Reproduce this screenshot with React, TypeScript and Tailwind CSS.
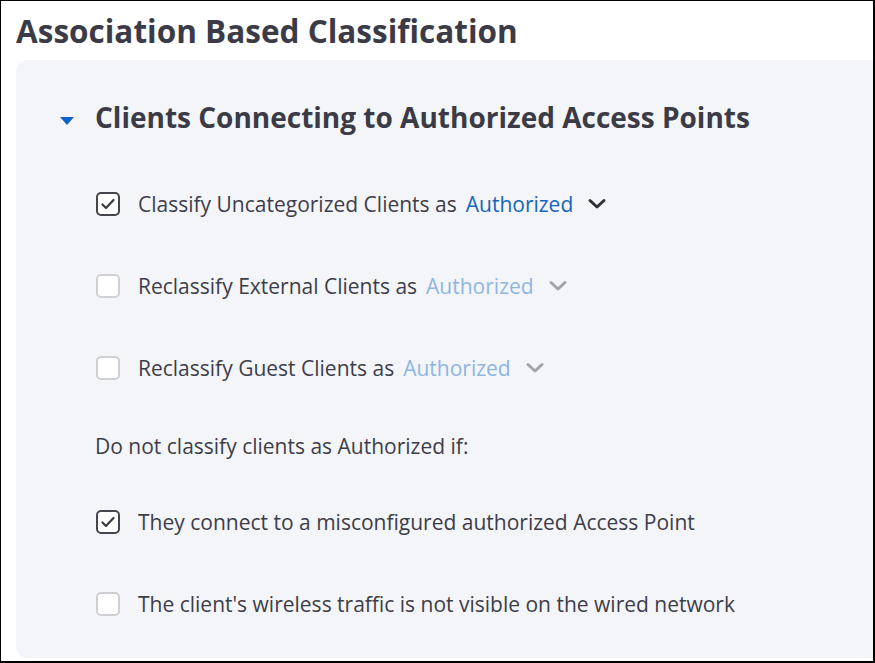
import React from "react";

function Check({ checked }: { checked: boolean }) {
  return (
    <div
      className={
        "w-[24px] h-[24px] rounded-[5px] bg-white flex items-center justify-center shrink-0 border-2 " +
        (checked ? "border-[#45454f]" : "border-[#cfcfd4]")
      }
    >
      {checked && (
        <svg width="16" height="14" viewBox="0 0 16 14" fill="none">
          <path d="M2.5 7.5 L6 11 L13.5 3" stroke="#3a3a44" strokeWidth="2.2" strokeLinecap="round" strokeLinejoin="round" />
        </svg>
      )}
    </div>
  );
}

function Chevron({ active }: { active: boolean }) {
  return (
    <svg width="20" height="12" viewBox="0 0 20 12" fill="none" className="ml-[14px]">
      <path d="M3 2.5 L10 9 L17 2.5" stroke={active ? "#2f2f38" : "#a3a3a8"} strokeWidth="3" strokeLinecap="round" strokeLinejoin="round" />
    </svg>
  );
}

function Row({ checked, label, select, active }: { checked: boolean; label: string; select?: string; active?: boolean }) {
  return (
    <div className="flex items-center h-[82px]">
      <Check checked={checked} />
      <span className="ml-[18px] text-[21px] text-[#3d3d4a] leading-none">{label}</span>
      {select && (
        <>
          <span className={"ml-[9px] text-[21px] leading-none " + (active ? "text-[#1565c0]" : "text-[#8db6e3]")}>{select}</span>
          <Chevron active={!!active} />
        </>
      )}
    </div>
  );
}

export default function App() {
  return (
    <div
      className="w-[875px] h-[663px] bg-white border-black border-l border-t border-r-2 border-b-2 flex flex-col overflow-hidden"
      style={{ fontFamily: '"Open Sans", "Noto Sans", sans-serif' }}
    >
      <div className="h-[59px] flex items-center pl-[15px]">
        <h1 className="text-[31.5px] font-bold text-[#3b3b47] leading-none">Association Based Classification</h1>
      </div>
      <div className="ml-[15px] h-[598px] bg-[#f4f5f9] rounded-l-[12px] pl-[44px] flex flex-col">
        <div className="flex items-center h-[114px]">
          <svg width="14" height="8" viewBox="0 0 14 8" className="mt-[8px]">
            <path d="M0 0 L14 0 L7 8 Z" fill="#0b62c4" />
          </svg>
          <h2 className="ml-[21px] text-[28px] font-bold text-[#3b3b47] leading-none">Clients Connecting to Authorized Access Points</h2>
        </div>
        <div className="pl-[36px] flex flex-col -mt-[11px]">
          <Row checked label="Classify Uncategorized Clients as" select="Authorized" active />
          <Row checked={false} label="Reclassify External Clients as" select="Authorized" />
          <Row checked={false} label="Reclassify Guest Clients as" select="Authorized" />
          <div className="h-[72px] pt-[2px] flex items-center -ml-[1px]">
            <span className="text-[21px] text-[#3d3d4a] leading-none">Do not classify clients as Authorized if:</span>
          </div>
          <Row checked label="They connect to a misconfigured authorized Access Point" />
          <Row checked={false} label="The client's wireless traffic is not visible on the wired network" />
        </div>
      </div>
    </div>
  );
}
